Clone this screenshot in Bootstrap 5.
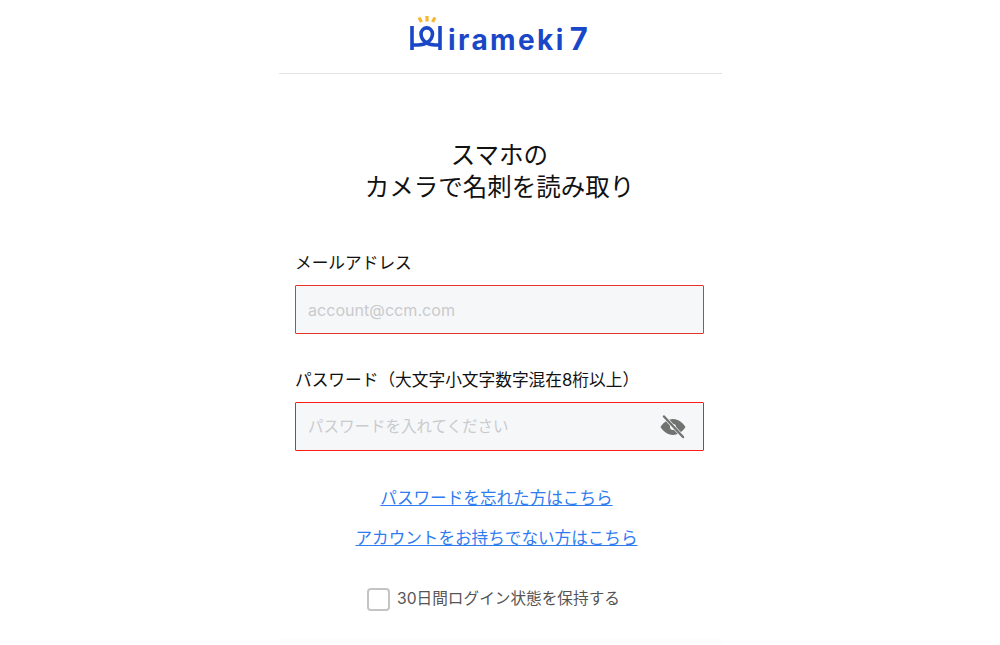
<!DOCTYPE html>
<html lang="ja">
<head>
<meta charset="utf-8">
<title>Hirameki 7</title>
<link href="https://cdn.jsdelivr.net/npm/bootstrap@5.3.0/dist/css/bootstrap.min.css" rel="stylesheet">
<style>
html,body{height:645px;overflow:hidden;background:#fff;}
body{font-family:"Inter","Noto Sans CJK JP",sans-serif;color:#111;}
.shell{width:443px;margin-left:279px;}
.brand-bar{height:74px;border-bottom:1px solid #e2e2e2;padding-top:15px;padding-left:130px;}
.brand-word{font-family:"Inter","Noto Sans",sans-serif;font-weight:700;font-size:28px;line-height:38px;color:#1a47c8;letter-spacing:2.4px;margin:5px 0 0 3px;}
.brand-seven{margin-left:4px;font-size:31px;}
.login-title{font-size:24.5px;line-height:32px;font-weight:400;margin:65px 2px 0 0;color:#111;}
.form-wrap{padding:0 18px 0 16px;margin-top:48px;}
.field-label{font-size:16.7px;line-height:24px;margin:0 0 10px;color:#111;display:block;}
.field-box{height:49px;background:#f6f7f9;border:1px solid #e8322c;border-radius:1px;padding:0 12px;font-size:16.1px;box-shadow:none;width:100%;}
.field-box::placeholder{color:#c9cbcd;opacity:1;}
.field-box:focus{background:#f6f7f9;border-color:#e8322c;box-shadow:none;}
.field-bright,.field-bright:focus{border-color:#ff1a14;padding-right:48px;font-size:15.5px;}
.field-gap{margin-top:34px;}
.eye-btn{right:18px;top:50%;transform:translateY(-50%);width:26px;height:24px;display:flex;}
.link-stack{margin-top:35px;font-size:16.6px;line-height:24px;margin-right:6px;}
.link-stack a{color:#2f7bf0;display:block;}
.link-stack a+a{margin-top:16px;}
.keep-row{margin-top:37px;color:#555;font-size:15.65px;line-height:24px;margin-left:-12px;gap:7px;}
.keep-check{width:23px;height:23px;border:2.5px solid #c4c4c4;border-radius:5px;background:#fff;margin:0;flex:none;}
.keep-check:focus{box-shadow:none;border-color:#c4c4c4;}
.foot-fade{height:6px;background:#fdfdfd;margin-top:27px;}
</style>
</head>
<body>
<div class="shell">
  <header class="brand-bar d-flex align-items-start">
    <svg width="36" height="38" viewBox="0 0 36 38" class="flex-shrink-0" aria-hidden="true">
      <g fill="none" stroke="#f5b731" stroke-width="3.200">
        <path d="M10 2.500 12.500 7"/><path d="M18 1v5.500"/><path d="M26 2.500 23.500 7"/>
      </g>
      <g fill="none" stroke="#1a47c8" stroke-width="3.600">
        <path d="M3 11v24"/><path d="M31 11v24"/>
        <path d="M3 30H9C16 30 23.500 26 23.500 18.500A5.800 6.500 0 0 0 12 18.500C12 26 19 30 26 30H31"/>
      </g>
    </svg>
    <span class="brand-word">irameki<span class="brand-seven">7</span></span>
  </header>
  <h1 class="login-title text-center">スマホの<br>カメラで名刺を読み取り</h1>
  <form class="form-wrap">
    <label class="field-label" for="mail">メールアドレス</label>
    <input id="mail" class="form-control field-box" type="text" placeholder="account@ccm.com">
    <div class="field-gap">
      <label class="field-label" for="pw">パスワード（大文字小文字数字混在8桁以上）</label>
      <div class="position-relative">
        <input id="pw" class="form-control field-box field-bright" type="password" placeholder="パスワードを入れてください">
        <span class="eye-btn position-absolute">
          <svg width="26" height="24" viewBox="0 0 26 24" aria-hidden="true">
            <path fill="#6f7471" d="M13 4C7.500 4 3 8 .5 12c2.500 4 7 8 12.500 8s10-4 12.500-8C23 8 18.500 4 13 4Zm0 5a3 3 0 1 1 0 6 3 3 0 0 1 0-6Z"/>
            <path stroke="#f6f7f9" stroke-width="3.500" d="M4 1.500 23 22"/>
            <path stroke="#6f7471" stroke-width="2.400" stroke-linecap="round" d="M4 1.500 23 22"/>
          </svg>
        </span>
      </div>
    </div>
    <div class="link-stack text-center">
      <a href="#">パスワードを忘れた方はこちら</a>
      <a href="#">アカウントをお持ちでない方はこちら</a>
    </div>
    <div class="keep-row d-flex justify-content-center align-items-center">
      <input class="form-check-input keep-check" type="checkbox" id="keep">
      <label for="keep">30日間ログイン状態を保持する</label>
    </div>
  </form>
  <div class="foot-fade"></div>
</div>
<script src="https://cdn.jsdelivr.net/npm/bootstrap@5.3.0/dist/js/bootstrap.bundle.min.js"></script>
</body>
</html>
